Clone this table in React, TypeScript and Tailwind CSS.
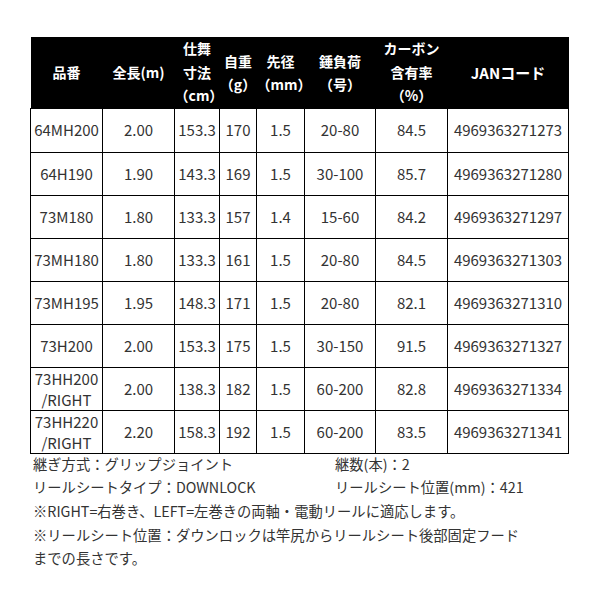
const font = { fontFamily: '"Noto Sans CJK JP", "Noto Sans", sans-serif' };

const rows = [
  ["64MH200", "2.00", "153.3", "170", "1.5", "20-80", "84.5", "4969363271273"],
  ["64H190", "1.90", "143.3", "169", "1.5", "30-100", "85.7", "4969363271280"],
  ["73M180", "1.80", "133.3", "157", "1.4", "15-60", "84.2", "4969363271297"],
  ["73MH180", "1.80", "133.3", "161", "1.5", "20-80", "84.5", "4969363271303"],
  ["73MH195", "1.95", "148.3", "171", "1.5", "20-80", "82.1", "4969363271310"],
  ["73H200", "2.00", "153.3", "175", "1.5", "30-150", "91.5", "4969363271327"],
  ["73HH200\n/RIGHT", "2.00", "138.3", "182", "1.5", "60-200", "82.8", "4969363271334"],
  ["73HH220\n/RIGHT", "2.20", "158.3", "192", "1.5", "60-200", "83.5", "4969363271341"],
];

const widths = [72, 72, 45, 37, 48, 71, 72, 121];

export default function App() {
  return (
    <div className="w-[600px] h-[600px] bg-white pt-[37px] pl-[30px]" style={font}>
      <table className="table-fixed border-collapse w-[538px] text-[15px] text-[#333]">
        <colgroup>
          {widths.map((w, i) => (
            <col key={i} style={{ width: w }} />
          ))}
        </colgroup>
        <thead>
          <tr className="bg-black text-white font-bold h-[71px] leading-[23.5px] text-[14px]">
            <th className="font-bold">品番</th>
            <th className="font-bold whitespace-nowrap">全長(m)</th>
            <th className="font-bold">仕舞<br />寸法<br />（cm）</th>
            <th className="font-bold pt-[2px] whitespace-nowrap">自重<br />（g）</th>
            <th className="font-bold pt-[2px] whitespace-nowrap">先径<br />（mm）</th>
            <th className="font-bold pt-[2px]">錘負荷<br />（号）</th>
            <th className="font-bold">カーボン<br />含有率<br />（%）</th>
            <th className="font-bold text-[15px]">JANコード</th>
          </tr>
        </thead>
        <tbody>
          {rows.map((r, i) => (
            <tr key={i} className={i === 0 ? "h-[44px]" : "h-[43px]"}>
              {r.map((c, j) => (
                <td
                  key={j}
                  className={
                    "border border-black text-center p-0 whitespace-pre-line " +
                    (c.includes("\n") ? "leading-[21px]" : "leading-[20px]")
                  }
                >
                  {c}
                </td>
              ))}
            </tr>
          ))}
        </tbody>
      </table>
      <div className="text-[14.3px] text-[#333] leading-[23.7px] pl-[3px] -mt-[2px]">
        <div className="flex">
          <span className="w-[302px]">継ぎ方式：グリップジョイント</span>
          <span>継数(本)：2</span>
        </div>
        <div className="flex">
          <span className="w-[302px]">リールシートタイプ：DOWNLOCK</span>
          <span>リールシート位置(mm)：421</span>
        </div>
        <div>※RIGHT=右巻き、LEFT=左巻きの両軸・電動リールに適応します。</div>
        <div>※リールシート位置：ダウンロックは竿尻からリールシート後部固定フード</div>
        <div>までの長さです。</div>
      </div>
    </div>
  );
}
